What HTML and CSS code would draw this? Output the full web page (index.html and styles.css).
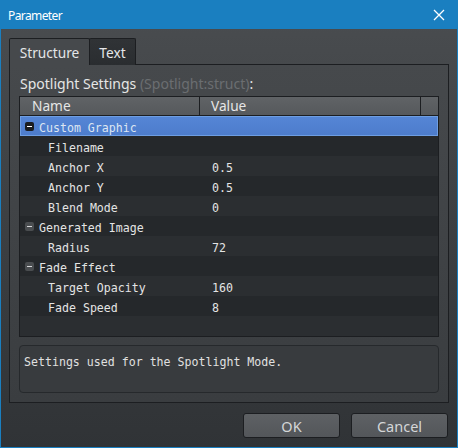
FILE: index.html
```html
<!DOCTYPE html>
<html>
<head>
<meta charset="utf-8">
<link rel="stylesheet" href="styles.css">
</head>
<body>
<div class="window">
  <div class="titlebar">
    <span class="title">Parameter</span>
    <svg class="close" width="12" height="12" viewBox="0 0 12 12"><path d="M1 1L11 11M11 1L1 11" stroke="#ffffff" stroke-width="1.3" fill="none"/></svg>
  </div>
  <div class="body">
    <div class="tabs">
      <div class="tab active">Structure</div>
      <div class="tab">Text</div>
    </div>
    <div class="panel">
      <div class="label">Spotlight Settings <span class="type">(Spotlight:struct)</span>:</div>
      <div class="table">
        <div class="thead">
          <div class="th name">Name</div>
          <div class="th value">Value</div>
          <div class="th extra"></div>
        </div>
        <div class="rows">
          <div class="row selected group"><span class="tog sel"></span><span class="cname">Custom Graphic</span><span class="cval"></span></div>
          <div class="row child"><span class="cname">Filename</span><span class="cval"></span></div>
          <div class="row child"><span class="cname">Anchor X</span><span class="cval">0.5</span></div>
          <div class="row child"><span class="cname">Anchor Y</span><span class="cval">0.5</span></div>
          <div class="row child"><span class="cname">Blend Mode</span><span class="cval">0</span></div>
          <div class="row group"><span class="tog"></span><span class="cname">Generated Image</span><span class="cval"></span></div>
          <div class="row child"><span class="cname">Radius</span><span class="cval">72</span></div>
          <div class="row group"><span class="tog"></span><span class="cname">Fade Effect</span><span class="cval"></span></div>
          <div class="row child"><span class="cname">Target Opacity</span><span class="cval">160</span></div>
          <div class="row child"><span class="cname">Fade Speed</span><span class="cval">8</span></div>
          <div class="row empty"></div>
        </div>
      </div>
      <div class="desc">Settings used for the Spotlight Mode.</div>
    </div>
    <div class="buttons">
      <div class="btn">OK</div>
      <div class="btn">Cancel</div>
    </div>
  </div>
</div>
</body>
</html>
```
FILE: styles.css
```css
html, body {
  margin: 0;
  padding: 0;
  width: 458px;
  height: 448px;
  overflow: hidden;
  background: #1a7fc0;
}
.window {
  box-sizing: border-box;
  width: 458px;
  height: 448px;
  border: 1px solid #1a7fc0;
  display: flex;
  flex-direction: column;
  background: linear-gradient(#4a4d50, #3f4245 40%, #303336);
}
.titlebar {
  height: 28px;
  flex: none;
  background: #1a7fc0;
  display: flex;
  align-items: center;
  justify-content: space-between;
  padding: 0 12px 0 7px;
}
.title {
  font-family: "Noto Sans", sans-serif;
  font-size: 12px;
  letter-spacing: -0.6px;
  color: #ffffff;
}
.body {
  flex: 1;
  display: flex;
  flex-direction: column;
  padding: 9px 8px 0 8px;
}
.tabs {
  display: flex;
  height: 26px;
  font-family: "Noto Sans", sans-serif;
  font-size: 13.7px;
}
.tab {
  box-sizing: border-box;
  height: 27px;
  border: 1px solid #1c1e21;
  border-bottom: none;
  border-radius: 2px 2px 0 0;
  display: flex;
  align-items: center;
  justify-content: center;
  color: #e4e6e8;
  background: linear-gradient(#303336, #2a2d30);
  width: 47px;
  margin-left: -1px;
  position: relative;
  z-index: 1;
}
.tab.active {
  width: 81px;
  margin-left: 0;
  background: #46494c;
  z-index: 2;
}
.panel {
  box-sizing: border-box;
  height: 339px;
  border: 1px solid #1c1e21;
  background: linear-gradient(#46494c, #3a3d40);
  padding: 0 9px;
  display: flex;
  flex-direction: column;
}
.label {
  font-family: "Noto Sans", sans-serif;
  font-size: 14px;
  color: #e6e6e6;
  height: 18px;
  line-height: 18px;
  margin-top: 10px;
  margin-bottom: 3px;
  padding-left: 1px;
}
.type { color: #6b6e71; }
.table {
  box-sizing: border-box;
  height: 241px;
  border: 1px solid #1c1e21;
  background: #2b2e31;
  display: flex;
  flex-direction: column;
}
.thead {
  display: flex;
  height: 19px;
  box-sizing: border-box;
  border-bottom: 1px solid #1c1e21;
  background: linear-gradient(#606366, #56595c);
  font-family: "Noto Sans", sans-serif;
  font-size: 13.7px;
  color: #e6e6e6;
}
.th {
  box-sizing: border-box;
  line-height: 18px;
  border-right: 1px solid #1c1e21;
}
.th.name { width: 180px; padding-left: 12px; }
.th.value { width: 221px; padding-left: 11px; }
.th.extra { flex: 1; border-right: none; }
.rows {
  flex: 1;
  display: flex;
  flex-direction: column;
  font-family: "DejaVu Sans Mono", monospace;
  font-size: 11.6px;
  color: #e4e4e4;
}
.row {
  height: 20px;
  display: flex;
  align-items: center;
  background: #25282b;
  flex: none;
}
.row:nth-child(odd) { background: #2b2e31; }
.row.empty { flex: 1; }
.row.selected {
  background: linear-gradient(#5586d6, #4d7ccb);
  box-shadow: inset 0 0 0 1px #6e9ee2;
  color: #dde6f2;
}
.cname, .cval {
  box-sizing: border-box;
  padding-top: 4px;
}
.cname { width: 192px; flex: none; }
.row.child .cname { padding-left: 28px; }
.row.group .cname { padding-left: 5px; width: 177px; }
.cval { flex: 1; }
.tog {
  box-sizing: border-box;
  width: 9px;
  height: 9px;
  margin-left: 5px;
  border-radius: 2px;
  background: #4a4d50;
  position: relative;
  flex: none;
}
.tog::after {
  content: "";
  position: absolute;
  left: 2px;
  right: 2px;
  top: 4px;
  height: 1px;
  background: #d6d8da;
}
.tog.sel { background: #1b1d20; }
.tog.sel::after { background: #ffffff; }
.desc {
  box-sizing: border-box;
  margin-top: 8px;
  height: 48px;
  border: 1px solid #26292c;
  border-radius: 4px;
  background: #383b3e;
  padding: 9px 0 0 4px;
  font-family: "DejaVu Sans Mono", monospace;
  font-size: 11.6px;
  color: #e0e0e0;
}
.buttons {
  display: flex;
  justify-content: flex-end;
  gap: 11px;
  padding: 10px 1px 0 0;
}
.btn {
  box-sizing: border-box;
  width: 97px;
  height: 25px;
  border: 1px solid #1c1e21;
  border-radius: 3px;
  background: linear-gradient(#5e6164, #53565a);
  display: flex;
  align-items: center;
  justify-content: center;
  font-family: "Noto Sans", sans-serif;
  font-size: 14.5px;
  color: #d4d6d8;
}
```
